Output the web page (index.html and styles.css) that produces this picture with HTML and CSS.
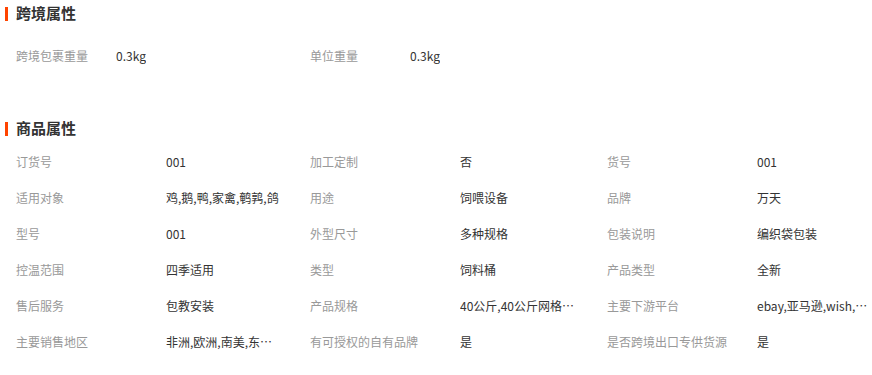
FILE: index.html
```html
<!DOCTYPE html>
<html lang="zh">
<head>
<meta charset="utf-8">
<title>属性</title>
<link rel="stylesheet" href="styles.css">
</head>
<body>
<section class="section section-cross">
  <h2 class="sec-title"><span class="sec-bar"></span>跨境属性</h2>
  <div class="attr-grid attr-grid-narrow">
    <div class="attr"><span class="attr-label">跨境包裹重量</span><span class="attr-value">0.3kg</span></div>
    <div class="attr"><span class="attr-label">单位重量</span><span class="attr-value">0.3kg</span></div>
  </div>
</section>
<section class="section section-goods">
  <h2 class="sec-title"><span class="sec-bar"></span>商品属性</h2>
  <div class="attr-grid">
    <div class="attr"><span class="attr-label">订货号</span><span class="attr-value">001</span></div>
    <div class="attr"><span class="attr-label">加工定制</span><span class="attr-value">否</span></div>
    <div class="attr"><span class="attr-label">货号</span><span class="attr-value">001</span></div>
    <div class="attr"><span class="attr-label">适用对象</span><span class="attr-value">鸡,鹅,鸭,家禽,鹌鹑,鸽</span></div>
    <div class="attr"><span class="attr-label">用途</span><span class="attr-value">饲喂设备</span></div>
    <div class="attr"><span class="attr-label">品牌</span><span class="attr-value">万天</span></div>
    <div class="attr"><span class="attr-label">型号</span><span class="attr-value">001</span></div>
    <div class="attr"><span class="attr-label">外型尺寸</span><span class="attr-value">多种规格</span></div>
    <div class="attr"><span class="attr-label">包装说明</span><span class="attr-value">编织袋包装</span></div>
    <div class="attr"><span class="attr-label">控温范围</span><span class="attr-value">四季适用</span></div>
    <div class="attr"><span class="attr-label">类型</span><span class="attr-value">饲料桶</span></div>
    <div class="attr"><span class="attr-label">产品类型</span><span class="attr-value">全新</span></div>
    <div class="attr"><span class="attr-label">售后服务</span><span class="attr-value">包教安装</span></div>
    <div class="attr"><span class="attr-label">产品规格</span><span class="attr-value">40公斤,40公斤网格,60公斤</span></div>
    <div class="attr"><span class="attr-label">主要下游平台</span><span class="attr-value">ebay,亚马逊,wish,速卖通</span></div>
    <div class="attr"><span class="attr-label">主要销售地区</span><span class="attr-value">非洲,欧洲,南美,东南亚</span></div>
    <div class="attr"><span class="attr-label">有可授权的自有品牌</span><span class="attr-value">是</span></div>
    <div class="attr"><span class="attr-label">是否跨境出口专供货源</span><span class="attr-value">是</span></div>
  </div>
</section>
</body>
</html>
```

FILE: styles.css
```css
* { box-sizing: border-box; }
body {
  margin: 0;
  background: #fff;
  font-family: "Noto Sans CJK SC", "Noto Sans", sans-serif;
  font-size: 12px;
  color: #333;
}
.section-cross { padding-bottom: 42px; }
.sec-title {
  margin: 0;
  height: 24px;
  display: flex;
  align-items: center;
  gap: 8px;
  padding-left: 5px;
  font-size: 15px;
  font-weight: bold;
  color: #333;
}
.sec-bar {
  width: 3px;
  height: 14px;
  margin-top: 3px;
  background: #ff4400;
}
.attr-grid {
  display: grid;
  grid-template-columns: 294px 297px 1fr;
  padding-left: 16px;
}
.section-cross .attr-grid { margin-top: 13px; }
.section-goods .attr-grid { margin-top: 4px; }
.attr {
  height: 36px;
  display: flex;
  align-items: center;
}
.attr-label {
  width: 150px;
  flex: none;
  color: #999;
  white-space: nowrap;
}
.attr-grid-narrow .attr-label { width: 100px; }
.attr-value {
  max-width: 115px;
  color: #333;
  white-space: nowrap;
  overflow: hidden;
  text-overflow: ellipsis;
}
```
